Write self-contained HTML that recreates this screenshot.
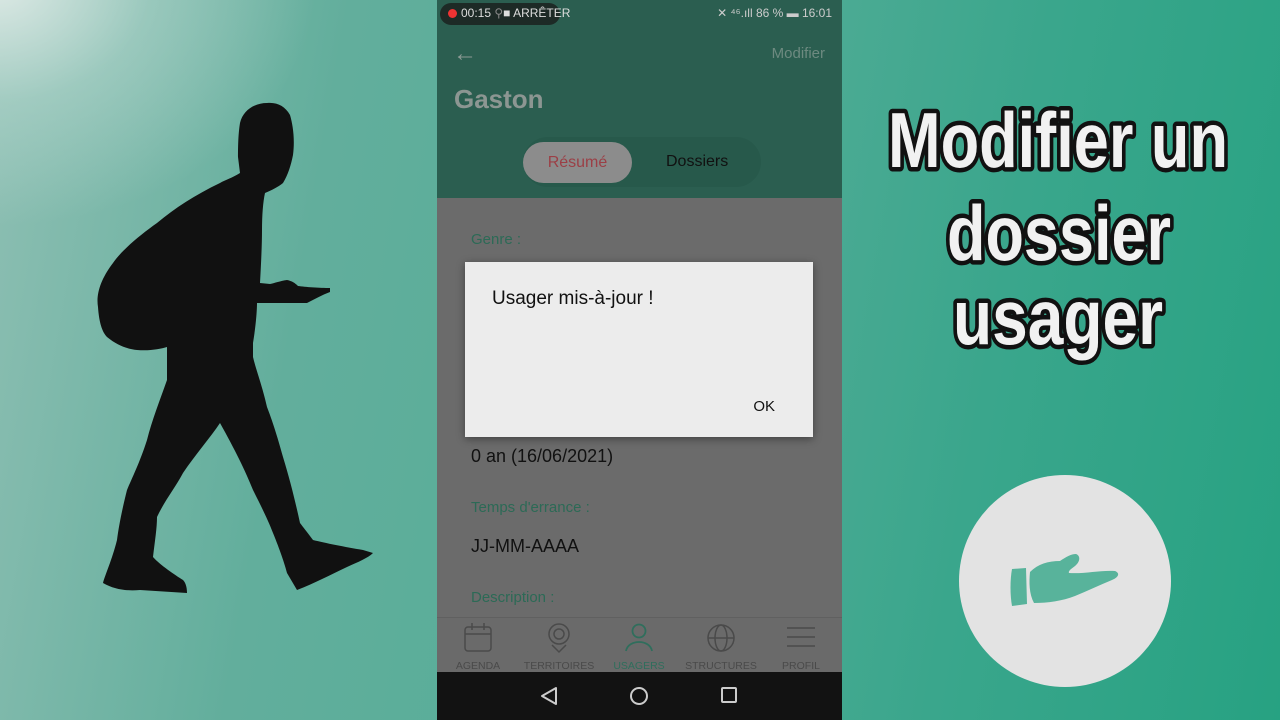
<!DOCTYPE html>
<html><head><meta charset="utf-8"><style>
html,body{margin:0;padding:0;width:1280px;height:720px;overflow:hidden}
body{position:relative;background:linear-gradient(100deg,#8ebfb3 0%,#62ae9c 25%,#56ad98 50%,#3aa68c 75%,#27a282 100%);font-family:"Liberation Sans",sans-serif}
.glow{position:absolute;left:-200px;top:-200px;width:560px;height:460px;background:radial-gradient(ellipse at 35% 40%,rgba(230,238,235,.9) 0%,rgba(190,220,212,.45) 30%,rgba(120,185,168,0) 62%)}
.phone{position:absolute;left:437px;top:0;width:405px;height:720px;background:#6b6b6b;overflow:hidden}
.hdr{position:absolute;left:0;top:0;width:405px;height:198px;background:#2b5e50}
.abs{position:absolute}
</style></head><body>
<div class="glow"></div>
<svg class="abs" style="left:0;top:0" width="437" height="720" viewBox="0 0 437 720">
<path fill="#111" d="M267,103 C255,103 243,110 240,123 C238,135 238,150 238,157 L240,173 C232,178 225,180 220,183 C195,195 175,208 157,223 C140,235 122,250 113,263 C100,280 96,295 98,307 C99,322 102,332 107,337 C118,346 128,349 137,350 C150,351 160,349 167,347 L167,380 C160,400 152,420 147,440 C140,462 132,478 127,490 C122,510 119,525 117,540 C112,560 105,575 103,583 C115,590 128,591 140,590 L187,593 C187,586 185,582 183,580 C175,575 160,565 153,557 C155,540 157,528 157,517 C165,500 175,488 183,473 C195,455 210,438 220,423 C235,450 245,470 253,490 C262,508 268,520 273,533 C280,550 285,565 287,573 L297,590 C315,583 330,575 347,567 C358,562 368,558 373,553 L363,550 C345,547 325,543 313,540 C307,532 303,527 300,523 C295,500 290,480 283,457 C277,435 272,420 267,407 C262,385 256,370 253,357 L253,343 C256,325 257,310 257,303 L307,303 C315,299 322,295 330,292 L330,288 C320,288 305,287 298,286 C295,283 292,281 287,280 C280,281 275,283 270,284 L260,283 C261,265 262,245 262,230 C262,215 263,202 265,193 C272,190 278,187 283,183 C288,175 291,165 293,155 C295,140 293,125 290,115 C285,106 277,102 267,103 Z"/>
</svg>
<div class="phone">
 <div class="hdr"></div>
 <div class="abs" style="left:3px;top:3px;width:120px;height:22px;border-radius:11px;background:#1d2a26"></div>
 <div class="abs" style="left:11px;top:9px;width:9px;height:9px;border-radius:50%;background:#e33"></div>
 <div class="abs" style="left:24px;top:6px;font-size:12px;color:#ddd">00:15 <span style="color:#888">⚲</span>■ ARRÊTER</div>
 <div class="abs" style="right:10px;top:6px;font-size:12px;color:#ccc">✕ ⁴⁶.ıll 86 % ▬ 16:01</div>
 <div class="abs" style="left:16px;top:40px;font-size:24px;color:#8c9a95">←</div>
 <div class="abs" style="right:17px;top:45px;font-size:15px;color:#6d8a80">Modifier</div>
 <div class="abs" style="left:17px;top:84px;font-size:26px;font-weight:bold;color:#8c9692">Gaston</div>
 <div class="abs" style="left:86px;top:137px;width:238px;height:50px;border-radius:25px;background:#27594b"></div>
 <div class="abs" style="left:86px;top:142px;width:109px;height:41px;border-radius:21px;background:#8c8c8c;color:#9b3f46;font-size:16px;text-align:center;line-height:41px">Résumé</div>
 <div class="abs" style="left:229px;top:153px;font-size:16px;color:#111">Dossiers</div>
 <div class="abs" style="left:34px;top:231px;font-size:15px;color:#2c6a56">Genre :</div>
 <div class="abs" style="left:34px;top:446px;font-size:18px;color:#111">0 an (16/06/2021)</div>
 <div class="abs" style="left:34px;top:499px;font-size:15px;color:#2c6a56">Temps d'errance :</div>
 <div class="abs" style="left:34px;top:536px;font-size:18px;color:#111">JJ-MM-AAAA</div>
 <div class="abs" style="left:34px;top:589px;font-size:15px;color:#2c6a56">Description :</div>
 <div class="abs" style="left:0;top:617px;width:405px;height:55px;background:#6a6a6a;border-top:1px solid #606060"></div>
 <svg class="abs" style="left:0;top:618px" width="405" height="54">
  <g fill="none" stroke="#4a4a4a" stroke-width="1.5">
   <rect x="28" y="9" width="26" height="24" rx="3"/><line x1="28" y1="16" x2="54" y2="16"/><line x1="35" y1="5" x2="35" y2="12"/><line x1="47" y1="5" x2="47" y2="12"/>
   <circle cx="122" cy="16" r="10"/><circle cx="122" cy="16" r="5"/><path d="M115,27 L122,34 L129,27"/>
   <circle cx="284" cy="20" r="13"/><ellipse cx="284" cy="20" rx="6" ry="13"/><line x1="271" y1="20" x2="297" y2="20"/>
   <line x1="350" y1="10" x2="378" y2="10"/><line x1="350" y1="19" x2="378" y2="19"/><line x1="350" y1="28" x2="378" y2="28"/>
  </g>
  <g fill="none" stroke="#2f6e5c" stroke-width="1.8"><circle cx="202" cy="13" r="6.5"/><path d="M189,33 C191,21 213,21 215,33"/></g>
  <g font-size="10.5" fill="#4a4a4a" text-anchor="middle"><text x="41" y="51">AGENDA</text><text x="122" y="51">TERRITOIRES</text><text x="202" y="51" fill="#2f6e5c">USAGERS</text><text x="284" y="51">STRUCTURES</text><text x="364" y="51">PROFIL</text></g>
 </svg>
 <div class="abs" style="left:0;top:672px;width:405px;height:48px;background:#121212"></div>
 <svg class="abs" style="left:0;top:672px" width="405" height="48"><g fill="none" stroke="#ccc" stroke-width="2" stroke-linejoin="round"><path d="M119,16 L105,24 L119,32 Z"/><circle cx="202" cy="24" r="8"/><rect x="285" y="16" width="14" height="14" rx="1"/></g></svg>
 <div class="abs" style="left:28px;top:262px;width:348px;height:175px;background:#ececec;box-shadow:0 2px 8px rgba(0,0,0,.4)">
  <div class="abs" style="left:27px;top:26px;font-size:19px;color:#111">Usager mis-à-jour !</div>
  <div class="abs" style="right:38px;top:136px;font-size:15px;color:#111">OK</div>
 </div>
</div>
<svg class="abs" style="left:860px;top:90px" width="400" height="290">
 <g font-family="Liberation Sans,sans-serif" font-weight="bold" font-size="78" fill="#f1f1f1" stroke="#111" stroke-width="9" paint-order="stroke" stroke-linejoin="round" text-anchor="middle">
  <text x="198" y="77" textLength="340" lengthAdjust="spacingAndGlyphs">Modifier un</text>
  <text x="199" y="170" textLength="224" lengthAdjust="spacingAndGlyphs">dossier</text>
  <text x="198" y="254" textLength="210" lengthAdjust="spacingAndGlyphs">usager</text>
 </g>
</svg>
<div class="abs" style="left:959px;top:475px;width:212px;height:212px;border-radius:50%;background:#e3e3e3"></div>
<svg class="abs" style="left:950px;top:470px" width="230" height="230">
 <g fill="#58b39b">
  <path d="M62,99 L76,98 L77,134 L62,136 C60,125 60,110 62,99 Z"/>
  <path d="M80,102 C88,94 98,91 110,91 C116,87 121,84 126,84 C131,86 130,92 125,96 C121,99 118,101 119,103 C135,104 150,100 165,101 C170,103 169,107 162,110 C150,115 137,121 125,126 C112,131 98,133 84,133 C79,124 79,112 80,102 Z"/>
 </g>
</svg>
</body></html>
